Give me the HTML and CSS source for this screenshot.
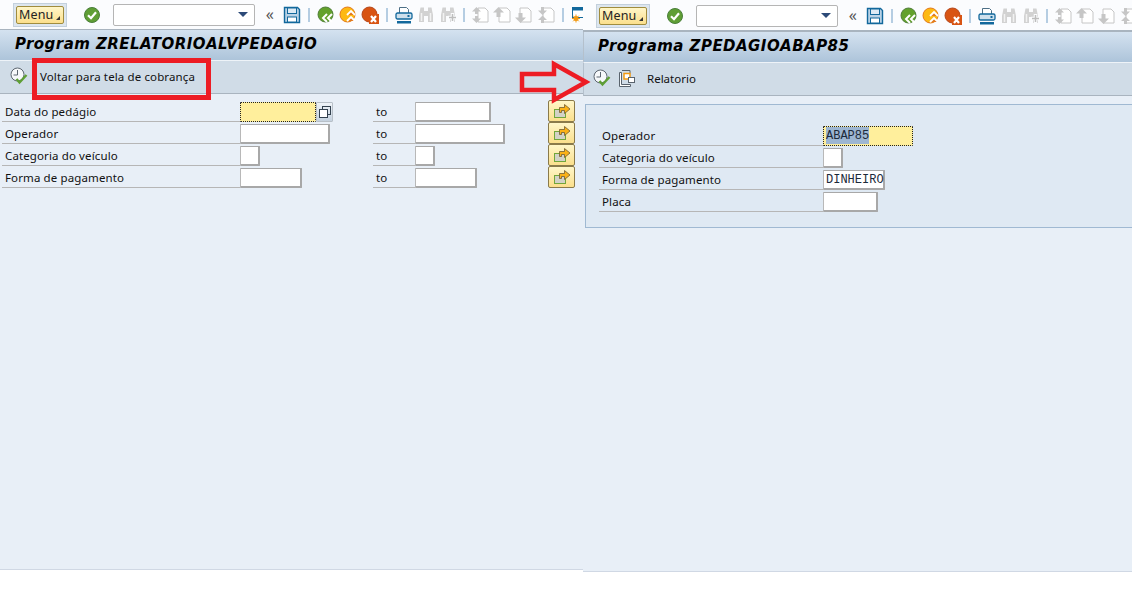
FILE: index.html
```html
<!DOCTYPE html>
<html lang="pt">
<head>
    <meta charset="UTF-8">
    <title>Programa ZPEDAGIOABAP85</title>
    <link rel="stylesheet" href="styles.css">
</head>
<body>

<svg class="defs" width="0" height="0">
    <symbol id="i-check" viewBox="0 0 18 18">
        <circle cx="9" cy="9" r="7.500" fill="#5f9e35" stroke="#4a7f3a"/>
        <path d="M5 9.200l3 3 5-6" fill="none" stroke="#fff" stroke-width="2.200"/>
    </symbol>
    <symbol id="i-save" viewBox="0 0 18 18">
        <path d="M1.500 1.500h13l2 2v13h-15z" fill="#b9d2e6" stroke="#12689c" stroke-width="1.400"/>
        <rect x="4.500" y="2" width="9" height="5.500" fill="#dceaf5" stroke="#12689c"/>
        <rect x="4.500" y="11" width="9" height="5" fill="#fff" stroke="#12689c"/>
    </symbol>
    <symbol id="i-back" viewBox="0 0 18 18">
        <circle cx="8.500" cy="8.500" r="7.500" fill="#63a12c" stroke="#4f7d3a"/>
        <path d="M10 8l-4 4 4 4M15 8l-4 4 4 4" fill="none" stroke="#fff" stroke-width="2"/>
    </symbol>
    <symbol id="i-exit" viewBox="0 0 18 18">
        <circle cx="8.500" cy="8.500" r="7.500" fill="#fdb913" stroke="#e2791c"/>
        <path d="M8 9l4-4 4 4M8 15l4-4 4 4" fill="#e2791c" stroke="#fff" stroke-width="1.800"/>
    </symbol>
    <symbol id="i-cancel" viewBox="0 0 18 18">
        <circle cx="8.500" cy="8.500" r="7.500" fill="#d85413" stroke="#b5471b"/>
        <rect x="8" y="8" width="10" height="10" fill="#d85413"/>
        <path d="M10 10l5 6M15 10l-5 6" stroke="#fff" stroke-width="2.200"/>
    </symbol>
    <symbol id="i-print" viewBox="0 0 18 18">
        <path d="M4.500 7V1.500h7l2 2V7" fill="#fff" stroke="#4d6f86"/>
        <rect x="1" y="7" width="16" height="6" rx="1.500" fill="#cfe0ec" stroke="#12689c" stroke-width="1.300"/>
        <rect x="12.500" y="9" width="2" height="2" fill="#12689c"/>
        <rect x="2" y="15" width="14" height="2.500" fill="#12689c"/>
    </symbol>
    <symbol id="i-find" viewBox="0 0 18 18">
        <path d="M3.500 1.500h3.500v14.500H2V9zM11 1.500h3.500L16 9v7h-5zM7 5h4v5H7z" fill="#d2d2d2"/>
        <path d="M4.500 7v8M13.500 7v8" stroke="#f2f2f2" stroke-width="1.500"/>
    </symbol>
    <symbol id="i-findnext" viewBox="0 0 18 18">
        <path d="M3.500 1.500h3.500v14.500H2V9zM11 1.500h3.500L16 9v7h-5zM7 5h4v5H7z" fill="#d2d2d2"/>
        <path d="M4.500 7v8" stroke="#f2f2f2" stroke-width="1.500"/>
        <path d="M13.500 7v9M9 11.500h9" stroke="#fbfcfe" stroke-width="3.500"/>
        <path d="M13.500 8v7M10 11.500h7" stroke="#bdbdbd" stroke-width="1.500"/>
    </symbol>
    <symbol id="i-first" viewBox="0 0 18 18">
        <path d="M7 2h7l3 3v11H7z" fill="#fff" stroke="#c6c6c6"/>
        <path d="M5.500 1L1 5.500h3V8h3V5.500h3zM1 12.500L5.500 17 10 12.500H7V10H4v2.500z" fill="#c6c6c6"/>
    </symbol>
    <symbol id="i-up" viewBox="0 0 18 18">
        <path d="M6 2h8l3 3v11H6z" fill="#fff" stroke="#c6c6c6"/>
        <path d="M5.500 1L0 6.500h3.500V11h4V6.500H11z" fill="#c6c6c6"/>
    </symbol>
    <symbol id="i-down" viewBox="0 0 18 18">
        <path d="M5 2h8l3 3v11H5z" fill="#fff" stroke="#c6c6c6"/>
        <path d="M5.500 17L0 11.500h3.500V7h4v4.500H11z" fill="#c6c6c6"/>
    </symbol>
    <symbol id="i-last" viewBox="0 0 18 18">
        <path d="M6 2h8l3 3v11H6z" fill="#fff" stroke="#c6c6c6"/>
        <path d="M5.500 9L1 4.500h3V1h3v3.500h3zM5.500 9.500L1 14h3v3h3v-3h3z" fill="#c6c6c6"/>
    </symbol>
    <symbol id="i-layout" viewBox="0 0 18 18">
        <rect x="1.500" y="1.500" width="15" height="10" fill="#fff" stroke="#12689c"/>
        <rect x="1.500" y="1.500" width="15" height="3" fill="#12689c"/>
        <circle cx="5" cy="12.500" r="2.500" fill="#f39a12"/>
        <path d="M5 8.500v8M1 12.500h8M2.200 9.700l5.600 5.600M7.800 9.700l-5.600 5.600" stroke="#f39a12"/>
    </symbol>
    <symbol id="i-clock" viewBox="0 0 18 18">
        <circle cx="7.500" cy="7.500" r="6.500" fill="#f6f8fa" stroke="#5d6670"/>
        <path d="M7.500 3v5M3.500 8h4" stroke="#5d6670"/>
        <path d="M6.500 12l3 3.500 7-7.500" fill="none" stroke="#5e9f35" stroke-width="2.400"/>
    </symbol>
    <symbol id="i-variant" viewBox="0 0 18 18">
        <path d="M1.500 3.500h2v12h9v2h-11z" fill="#fff" stroke="#59636d"/>
        <path d="M4 1.500h8v3" fill="none" stroke="#59636d"/>
        <rect x="6" y="4.500" width="6" height="5.500" fill="#fff" stroke="#f39a12" stroke-width="1.500"/>
        <rect x="10.500" y="8.500" width="6" height="5" fill="#fff" stroke="#59636d"/>
    </symbol>
    <symbol id="i-multi" viewBox="0 0 18 16">
        <rect x="1.500" y="6.500" width="11" height="8" fill="#d2d2c6" stroke="#72a63a"/>
        <path d="M6.500 4.500h5V1.500l5.500 4.500-5.500 4.500V7.500h-3v2h-2z" fill="#fbb116" stroke="#6e5c34" stroke-width=".8"/>
    </symbol>
    <symbol id="i-copy" viewBox="0 0 12 12">
        <rect x="3.500" y=".5" width="8" height="8" fill="none" stroke="#33414f"/>
        <rect x=".5" y="3.500" width="8" height="8" fill="#fff" stroke="#33414f"/>
    </symbol>
</svg>

<div class="screen">

    <section class="pane pane-left">
        <div class="toolbar">
            <div class="menu-frame"><div class="menu-btn">Menu<span class="menu-arrow"></span></div></div>
            <svg class="tool"><use href="#i-check"/></svg>
            <div class="combo"><span class="combo-arrow"></span></div>
            <span class="dbl">«</span>
            <svg class="tool"><use href="#i-save"/></svg>
            <span class="sep"></span>
            <svg class="tool"><use href="#i-back"/></svg>
            <svg class="tool"><use href="#i-exit"/></svg>
            <svg class="tool"><use href="#i-cancel"/></svg>
            <span class="sep"></span>
            <svg class="tool"><use href="#i-print"/></svg>
            <svg class="tool"><use href="#i-find"/></svg>
            <svg class="tool"><use href="#i-findnext"/></svg>
            <span class="sep sep-short"></span>
            <svg class="tool"><use href="#i-first"/></svg>
            <svg class="tool"><use href="#i-up"/></svg>
            <svg class="tool"><use href="#i-down"/></svg>
            <svg class="tool"><use href="#i-last"/></svg>
            <span class="sep"></span>
            <svg class="tool"><use href="#i-layout"/></svg>
        </div>
        <div class="title">Program ZRELATORIOALVPEDAGIO</div>
        <div class="appbar">
            <svg class="app-icon"><use href="#i-clock"/></svg>
            <span class="app-text">Voltar para tela de cobrança</span>
        </div>
        <div class="content">
            <div class="sel-grid">
                <div class="lbl">Data do pedágio</div>
                <div class="cell"><div class="field w76 focus"></div><div class="f4"><svg class="f4-icon"><use href="#i-copy"/></svg></div></div>
                <div class="lbl">to</div>
                <div class="cell"><div class="field w76"></div></div>
                <div class="multi"><svg class="multi-icon"><use href="#i-multi"/></svg></div>

                <div class="lbl">Operador</div>
                <div class="cell"><div class="field w90"></div></div>
                <div class="lbl">to</div>
                <div class="cell"><div class="field w90"></div></div>
                <div class="multi"><svg class="multi-icon"><use href="#i-multi"/></svg></div>

                <div class="lbl">Categoria do veículo</div>
                <div class="cell"><div class="field w20"></div></div>
                <div class="lbl">to</div>
                <div class="cell"><div class="field w20"></div></div>
                <div class="multi"><svg class="multi-icon"><use href="#i-multi"/></svg></div>

                <div class="lbl">Forma de pagamento</div>
                <div class="cell"><div class="field w62"></div></div>
                <div class="lbl">to</div>
                <div class="cell"><div class="field w62"></div></div>
                <div class="multi"><svg class="multi-icon"><use href="#i-multi"/></svg></div>
            </div>
        </div>
    </section>

    <section class="pane pane-right">
        <div class="toolbar">
            <div class="menu-frame"><div class="menu-btn">Menu<span class="menu-arrow"></span></div></div>
            <svg class="tool"><use href="#i-check"/></svg>
            <div class="combo"><span class="combo-arrow"></span></div>
            <span class="dbl">«</span>
            <svg class="tool"><use href="#i-save"/></svg>
            <span class="sep"></span>
            <svg class="tool"><use href="#i-back"/></svg>
            <svg class="tool"><use href="#i-exit"/></svg>
            <svg class="tool"><use href="#i-cancel"/></svg>
            <span class="sep"></span>
            <svg class="tool"><use href="#i-print"/></svg>
            <svg class="tool"><use href="#i-find"/></svg>
            <svg class="tool"><use href="#i-findnext"/></svg>
            <span class="sep sep-short"></span>
            <svg class="tool"><use href="#i-first"/></svg>
            <svg class="tool"><use href="#i-up"/></svg>
            <svg class="tool"><use href="#i-down"/></svg>
            <svg class="tool"><use href="#i-last"/></svg>
        </div>
        <div class="title">Programa ZPEDAGIOABAP85</div>
        <div class="appbar">
            <svg class="app-icon"><use href="#i-clock"/></svg>
            <svg class="app-icon app-icon-2"><use href="#i-variant"/></svg>
            <span class="app-text app-text-2">Relatorio</span>
        </div>
        <div class="content">
            <div class="group">
                <div class="group-row"><div class="lbl">Operador</div><div class="field w90 focus mono"><span class="selected">ABAP85</span></div></div>
                <div class="group-row"><div class="lbl">Categoria do veículo</div><div class="field w20"></div></div>
                <div class="group-row"><div class="lbl">Forma de pagamento</div><div class="field w62 mono">DINHEIRO</div></div>
                <div class="group-row"><div class="lbl">Placa</div><div class="field w55"></div></div>
            </div>
        </div>
    </section>

</div>

<!-- marcas vermelhas por cima das telas -->
<div class="red-box"></div>
<svg class="red-arrow" width="72" height="44" viewBox="0 0 72 44">
    <path d="M3 14h32V4l32 18-32 18V30H3z" fill="none" stroke="#ed1c24" stroke-width="4.500"/>
</svg>

</body>
</html>
```

FILE: styles.css
```css
* {
    box-sizing: border-box;
}
html, body {
    margin: 0;
    padding: 0;
    height: 591px;
    overflow: hidden;
    background-color: #ffffff;
}
body {
    font-family: "Noto Sans", sans-serif;
    font-size: 11.5px;
    letter-spacing: .12px;
    color: #111111;
    position: relative;
}
.defs {
    position: absolute;
}
.screen {
    display: flex;
    height: 591px;
}
.pane {
    display: flex;
    flex-direction: column;
    overflow: hidden;
}
.pane-left {
    width: 583px;
    flex: none;
    height: 570px;
}
.pane-right {
    flex: 1;
    height: 572px;
    min-width: 0;
}

/* barra do sistema */
.toolbar {
    display: flex;
    align-items: center;
    height: 30px;
    flex: none;
    padding-left: 13px;
    background-color: #fbfcfe;
    border-bottom: 1px solid #a9b4bf;
}
.pane-right .toolbar {
    height: 32px;
    padding-top: 1px;
    border-bottom: 2px solid #a9b4bf;
}
.menu-frame {
    width: 54px;
    height: 24px;
    flex: none;
    padding: 2px;
    margin-right: 14px;
    border: 1px solid #c3d0dc;
    background-color: #dde6ee;
}
.menu-btn {
    position: relative;
    height: 18px;
    padding-left: 2px;
    line-height: 16px;
    font-size: 12.500px;
    color: #222222;
    border: 1px solid #a08c3e;
    border-radius: 2px;
    background: linear-gradient(#fff6c8, #fbdf8c);
}
.menu-arrow {
    position: absolute;
    right: 3px;
    bottom: 3px;
    width: 0;
    height: 0;
    border-left: 4px solid transparent;
    border-bottom: 4px solid #333333;
}
.tool {
    width: 18px;
    height: 18px;
    flex: none;
    margin: 0 2px;
}
.combo {
    position: relative;
    width: 142px;
    height: 22px;
    flex: none;
    margin-left: 10px;
    background-color: #ffffff;
    border: 1px solid #b5b5b5;
    border-radius: 2px;
}
.combo-arrow {
    position: absolute;
    right: 6px;
    top: 7px;
    width: 0;
    height: 0;
    border-left: 5px solid transparent;
    border-right: 5px solid transparent;
    border-top: 5px solid #2c4a78;
}
.dbl {
    width: 26px;
    flex: none;
    padding-left: 4px;
    text-align: center;
    font-size: 16px;
    line-height: 15px;
    color: #555555;
}
.sep {
    width: 12px;
    height: 16px;
    flex: none;
    position: relative;
}
.sep::after {
    content: "";
    position: absolute;
    left: 5px;
    top: 1px;
    width: 2px;
    height: 14px;
    background-color: #b5cde2;
}
.sep-short {
    width: 10px;
}
.sep-short::after {
    left: 4px;
}

/* titulo */
.title {
    height: 31px;
    flex: none;
    padding-left: 15px;
    line-height: 28px;
    font-family: "DejaVu Sans", sans-serif;
    font-size: 15px;
    font-weight: bold;
    font-style: italic;
    letter-spacing: .46px;
    color: #000000;
    background: linear-gradient(#d4e2f0, #adc4da);
    border-bottom: 1px solid #eef3f8;
}
.pane-right .title {
    padding-left: 14px;
    border-left: 1px solid #b4c0cc;
}

/* barra de aplicacao */
.appbar {
    display: flex;
    align-items: center;
    height: 33px;
    flex: none;
    padding: 0 0 2px 10px;
    background-color: #d0dce7;
    border-bottom: 1px solid #a9b4bf;
}
.pane-right .appbar {
    padding-left: 9px;
    border-left: 1px solid #b4c0cc;
}
.app-icon {
    width: 18px;
    height: 18px;
    flex: none;
}
.app-icon-2 {
    margin-left: 7px;
}
.app-text {
    margin-left: 12px;
}
.app-text-2 {
    margin-left: 11px;
    letter-spacing: 0;
}

/* area de selecao */
.content {
    flex: 1;
    background-color: #e8eff7;
    border-bottom: 1px solid #d0d8e4;
}
.sel-grid {
    display: grid;
    grid-template-columns: 238px 133px 42px 133px 27px;
    grid-auto-rows: 22px;
    margin: 6px 0 0 2px;
}
.lbl {
    padding-left: 3px;
    line-height: 24px;
    border-bottom: 1px solid #b6b6b6;
}
.cell {
    display: flex;
    align-items: flex-end;
}
.field {
    height: 20px;
    padding-left: 2px;
    line-height: 18px;
    background-color: #ffffff;
    border: 1px solid #a8a8a8;
    border-right-width: 2px;
    border-bottom-width: 2px;
    border-left-color: #b8b8b8;
    border-radius: 1px;
}
.w20 { width: 20px; }
.w55 { width: 55px; }
.w62 { width: 62px; }
.w76 { width: 76px; }
.w90 { width: 90px; }
.focus {
    background-color: #ffef9c;
    border: 1px dotted #222222;
}
.mono {
    font-family: "Liberation Mono", monospace;
    font-size: 12px;
    letter-spacing: 0;
    color: #1c2a3a;
}
.selected {
    display: inline-block;
    height: 17px;
    background-color: #9db6d2;
}
.f4 {
    display: flex;
    align-items: center;
    justify-content: center;
    width: 17px;
    height: 20px;
    background: linear-gradient(#eef3f8, #c5d2df);
    border: 1px solid #b8c0c8;
    border-radius: 1px;
}
.f4-icon {
    width: 12px;
    height: 12px;
}
.multi {
    display: flex;
    align-items: center;
    justify-content: center;
    height: 22px;
    background: linear-gradient(#fff6c8, #fbdf8c);
    border: 1px solid #8a7a4a;
    border-radius: 2px;
}
.multi-icon {
    width: 18px;
    height: 16px;
}

/* grupo da tela direita */
.group {
    margin: 8px 0 0 2px;
    height: 124px;
    padding-top: 19px;
    padding-left: 13px;
    background-color: #dfe9f3;
    border: 1px solid #a0b9d2;
    border-right: none;
}
.group-row {
    display: flex;
    align-items: flex-end;
    height: 22px;
}
.group-row .lbl {
    width: 224px;
    height: 22px;
}

/* marcas vermelhas */
.red-box {
    position: absolute;
    left: 32px;
    top: 58px;
    width: 179px;
    height: 42px;
    border: 5px solid #ed1c24;
}
.red-arrow {
    position: absolute;
    left: 519px;
    top: 60px;
}
```
